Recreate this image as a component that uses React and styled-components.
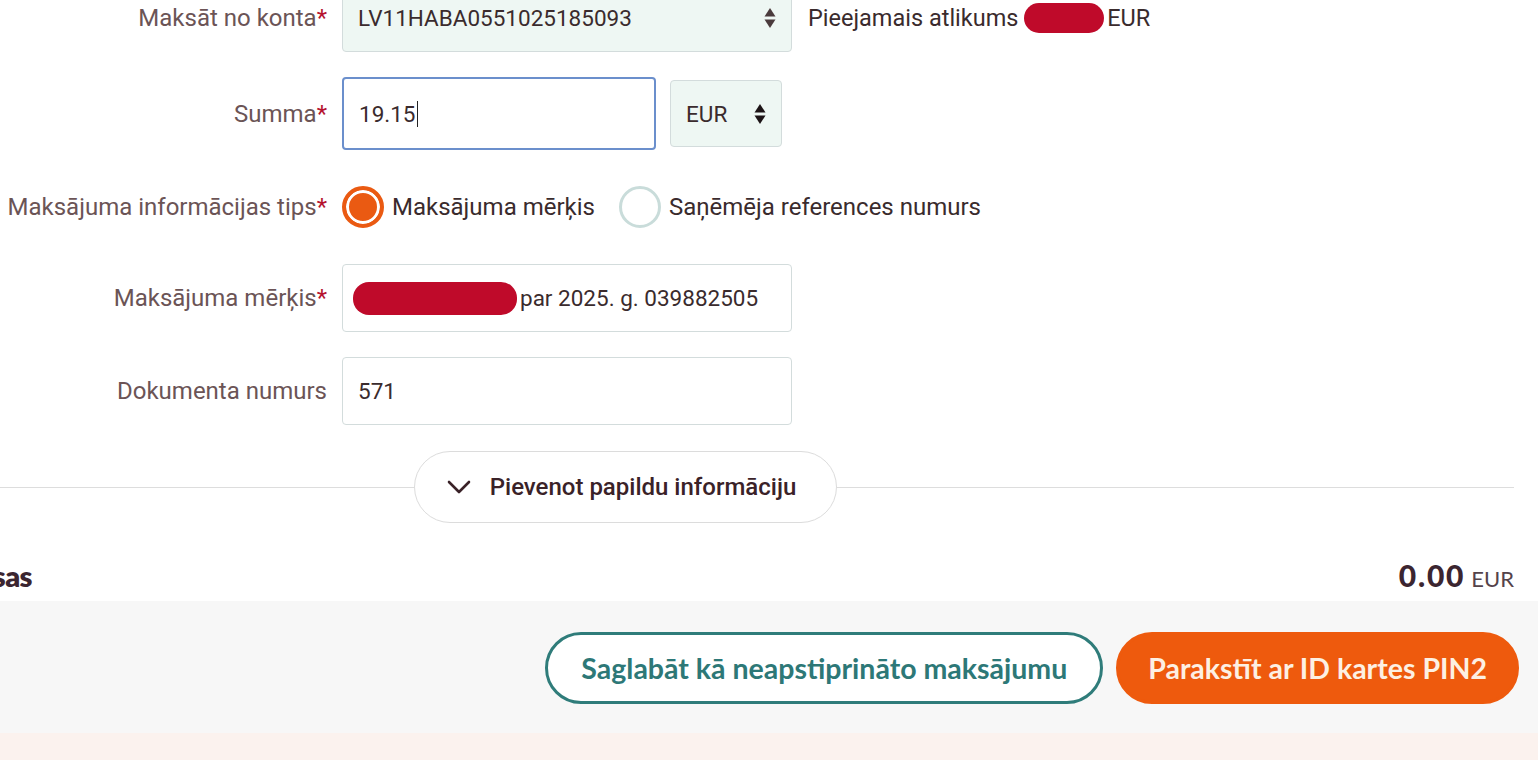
import styled, { createGlobalStyle } from 'styled-components';

const GlobalStyle = createGlobalStyle`
  html, body {
    margin: 0;
    padding: 0;
    background: #ffffff;
    overflow: hidden;
  }
  * {
    box-sizing: border-box;
  }
`;

const Page = styled.div`
  width: 1538px;
  height: 760px;
  overflow: hidden;
  background: #ffffff;
  font-family: Roboto, 'Liberation Sans', sans-serif;
`;

const Content = styled.div`
  width: 1672px;
  margin-left: -158px;
  margin-top: -16px;
`;

const FormGrid = styled.div`
  display: grid;
  grid-template-columns: 485px 1fr;
  grid-template-rows: 68px 73px 64px 68px 68px;
  column-gap: 15px;
  row-gap: 25px;
`;

const Label = styled.div`
  display: flex;
  align-items: center;
  justify-content: flex-end;
  font-size: 24px;
  color: #6b5456;
  white-space: nowrap;
  span {
    color: #b5122e;
  }
`;

const Field = styled.div`
  display: flex;
  align-items: center;
  gap: ${({ $gap }) => $gap || 14}px;
`;

const Box = styled.div`
  width: ${({ $w }) => $w}px;
  height: ${({ $h }) => $h || 68}px;
  display: flex;
  align-items: center;
  justify-content: space-between;
  padding: 0 ${({ $pad }) => $pad || 15}px;
  border: ${({ $focus }) => ($focus ? '2px solid #6b8fcc' : '1px solid #d3dcdc')};
  border-radius: 4px;
  background: ${({ $select }) => ($select ? '#eef7f3' : '#ffffff')};
  font-size: 22.5px;
  color: #3a2b2d;
  flex-shrink: 0;
`;

const Value = styled.div`
  display: flex;
  align-items: center;
  white-space: nowrap;
`;

const Caret = styled.span`
  display: inline-block;
  width: 1.5px;
  height: 26px;
  background: #222;
  margin-left: 1px;
`;

const Redacted = styled.span`
  display: inline-block;
  width: ${({ $w }) => $w}px;
  height: ${({ $h }) => $h || 30}px;
  border-radius: 16px;
  background: #bf0a2a;
  margin-right: 3px;
`;

const Balance = styled.div`
  display: flex;
  align-items: center;
  font-size: 23.5px;
  color: #3a2b2d;
  white-space: nowrap;
`;

const RadioGroup = styled.label`
  display: flex;
  align-items: center;
  gap: 8px;
  font-size: 24px;
  color: #3a2b2d;
  margin-right: 10px;
`;

const Radio = styled.span`
  width: 42px;
  height: 42px;
  border-radius: 50%;
  flex-shrink: 0;
  border: ${({ $checked }) => ($checked ? '4px solid #ea5a12' : '3px solid #c9dcda')};
  background: ${({ $checked }) => ($checked ? '#ea5a12' : '#ffffff')};
  box-shadow: ${({ $checked }) => ($checked ? 'inset 0 0 0 3px #ffffff' : 'none')};
`;

const ExpandRow = styled.div`
  display: flex;
  align-items: center;
  margin-top: 26px;
  &::before,
  &::after {
    content: '';
    height: 1px;
    background: #dddddd;
  }
  &::before {
    flex: 0 0 572px;
  }
  &::after {
    flex: 1;
  }
`;

const ExpandButton = styled.button`
  width: 423px;
  height: 72px;
  border: 1px solid #dcdcdc;
  border-radius: 36px;
  background: #ffffff;
  display: flex;
  align-items: center;
  justify-content: center;
  gap: 19px;
  font-family: Roboto, 'Liberation Sans', sans-serif;
  font-size: 24px;
  font-weight: 500;
  color: #3a2228;
  padding: 0 8px 0 0;
`;

const TotalRow = styled.div`
  height: 78px;
  display: flex;
  align-items: flex-end;
  justify-content: space-between;
  font-family: Lato, 'Open Sans', sans-serif;
  color: #3b2530;
  padding-bottom: 8px;
`;

const TotalLabel = styled.div`
  font-size: 29px;
  font-weight: 800;
  letter-spacing: -0.6px;
  margin-left: -29px;
`;

const TotalAmount = styled.div`
  display: flex;
  align-items: baseline;
  gap: 6px;
  b {
    font-size: 30px;
    font-weight: 900;
    letter-spacing: 1.8px;
  }
  span {
    font-size: 22px;
    color: #54434a;
  }
`;

const Footer = styled.div`
  height: 132px;
  background: #f7f7f7;
  display: flex;
  align-items: center;
  justify-content: flex-end;
  gap: 13px;
  padding: 2px 19px 0 0;
`;

const ActionButton = styled.button`
  height: 72px;
  border-radius: 36px;
  padding: 0 ${({ $primary }) => ($primary ? 29 : 33)}px;
  font-family: Lato, 'Open Sans', sans-serif;
  font-size: 28.5px;
  font-weight: 700;
  border: ${({ $primary }) => ($primary ? '3px solid #ee5a0d' : '3px solid #2f7c7a')};
  background: ${({ $primary }) => ($primary ? '#ee5a0d' : '#ffffff')};
  color: ${({ $primary }) => ($primary ? '#fdf0e3' : '#2d7877')};
  white-space: nowrap;
`;

const BottomBand = styled.div`
  height: 40px;
  background: #fbf2ee;
`;

const SelectArrows = ({ color = '#4a3b3c' }) => (
  <svg width="12" height="22" viewBox="0 0 12 22">
    <path d="M6 1 L11.5 9.5 L0.5 9.5 Z" fill={color} />
    <path d="M6 21 L11.5 12.5 L0.5 12.5 Z" fill={color} />
  </svg>
);

const Chevron = () => (
  <svg width="24" height="14" viewBox="0 0 24 14">
    <path
      d="M2 2 L12 12 L22 2"
      fill="none"
      stroke="#3a2228"
      strokeWidth="2.6"
      strokeLinecap="round"
      strokeLinejoin="round"
    />
  </svg>
);

const App = () => {
  return (
    <Page>
      <GlobalStyle />
      <Content>
        <FormGrid>
          <Label>
            Maksāt no konta<span>*</span>
          </Label>
          <Field $gap={16}>
            <Box $w={450} $select>
              <Value>LV11HABA0551025185093</Value>
              <SelectArrows />
            </Box>
            <Balance>
              Pieejamais atlikums&nbsp;
              <Redacted $w={80} $h={30} />
              EUR
            </Balance>
          </Field>

          <Label>
            Summa<span>*</span>
          </Label>
          <Field $gap={14}>
            <Box $w={314} $h={73} $focus>
              <Value>
                19.15
                <Caret />
              </Value>
            </Box>
            <Box $w={112} $h={67} $select>
              <Value>EUR</Value>
              <SelectArrows color="#1c1416" />
            </Box>
          </Field>

          <Label>
            Maksājuma informācijas tips<span>*</span>
          </Label>
          <Field $gap={0}>
            <RadioGroup>
              <Radio $checked />
              Maksājuma mērķis
            </RadioGroup>
            <RadioGroup>
              <Radio />
              Saņēmēja references numurs
            </RadioGroup>
          </Field>

          <Label>
            Maksājuma mērķis<span>*</span>
          </Label>
          <Field>
            <Box $w={450} $pad={10}>
              <Value>
                <Redacted $w={164} $h={33} />
                par 2025. g. 039882505
              </Value>
            </Box>
          </Field>

          <Label>Dokumenta numurs</Label>
          <Field>
            <Box $w={450}>
              <Value>571</Value>
            </Box>
          </Field>
        </FormGrid>

        <ExpandRow>
          <ExpandButton>
            <Chevron />
            Pievenot papildu informāciju
          </ExpandButton>
        </ExpandRow>

        <TotalRow>
          <TotalLabel>Komisijas maksas</TotalLabel>
          <TotalAmount>
            <b>0.00</b>
            <span>EUR</span>
          </TotalAmount>
        </TotalRow>
      </Content>

      <Footer>
        <ActionButton>Saglabāt kā neapstiprināto maksājumu</ActionButton>
        <ActionButton $primary>Parakstīt ar ID kartes PIN2</ActionButton>
      </Footer>
      <BottomBand />
    </Page>
  );
};

export default App;
